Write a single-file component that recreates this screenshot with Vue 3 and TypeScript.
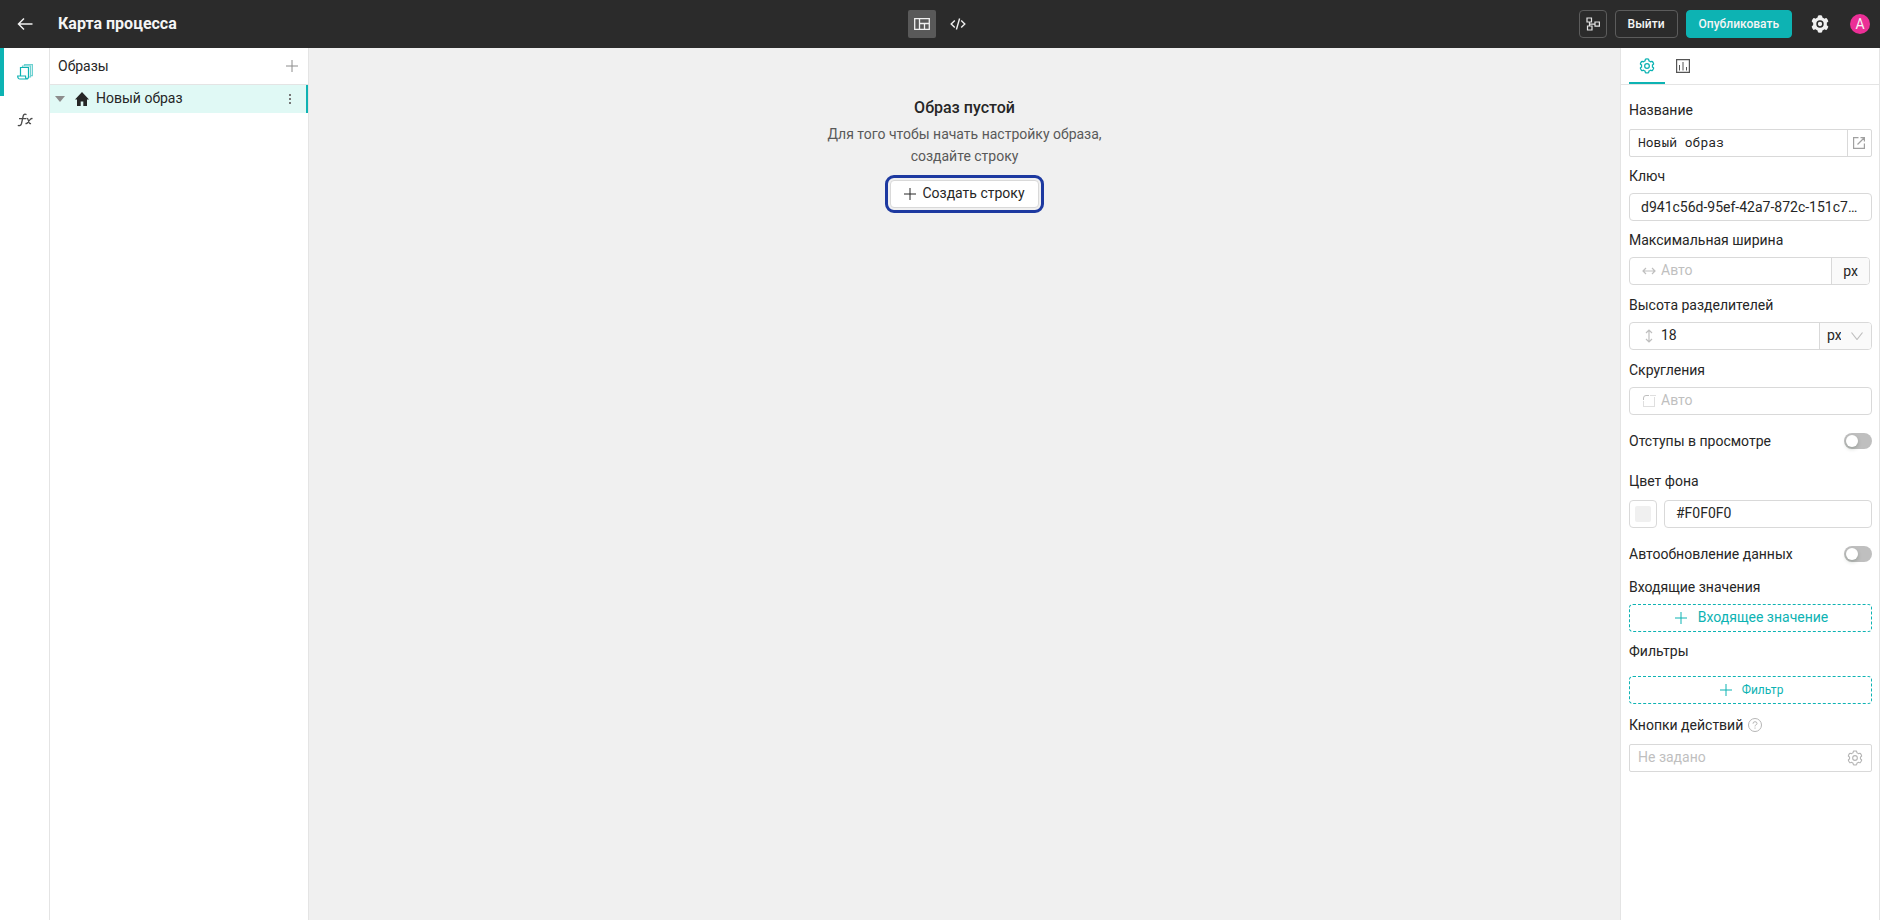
<script setup lang="ts">
import { ref } from 'vue'

const gearPath =
  'M924.8 625.7l-65.5-56c3.1-19 4.7-38.4 4.7-57.8s-1.6-38.8-4.7-57.8l65.5-56a32.03 32.03 0 009.3-35.2l-.9-2.6a443.74 443.74 0 00-79.7-137.9l-1.8-2.1a32.12 32.12 0 00-35.1-9.5l-81.3 28.9c-30-24.6-63.5-44-99.7-57.6l-15.7-85a32.05 32.05 0 00-25.8-25.7l-2.7-.5c-52.1-9.4-106.9-9.4-159 0l-2.7.5a32.05 32.05 0 00-25.8 25.7l-15.8 85.4a351.86 351.86 0 00-99 57.4l-81.9-29.1a32 32 0 00-35.1 9.5l-1.8 2.1a446.02 446.02 0 00-79.7 137.9l-.9 2.6c-4.5 12.5-.8 26.5 9.3 35.2l66.3 56.6c-3.1 18.8-4.6 38-4.6 57.1 0 19.2 1.5 38.4 4.6 57.1L99 625.5a32.03 32.03 0 00-9.3 35.2l.9 2.6c18.1 50.4 44.9 96.9 79.7 137.9l1.8 2.1a32.12 32.12 0 0035.1 9.5l81.9-29.1c29.8 24.5 63.1 43.9 99 57.4l15.8 85.4a32.05 32.05 0 0025.8 25.7l2.7.5a449.4 449.4 0 00159 0l2.7-.5a32.05 32.05 0 0025.8-25.7l15.7-85a350 350 0 0099.7-57.6l81.3 28.9a32 32 0 0035.1-9.5l1.8-2.1c34.8-41.1 61.6-87.5 79.7-137.9l.9-2.6c4.5-12.3.8-26.3-9.3-35z'

const name = ref('Новый образ')
const key = ref('d941c56d-95ef-42a7-872c-151c7a0b3e52')
const maxWidth = ref('')
const dividerHeight = ref('18')
const unit = ref('px')
const radius = ref('')
const previewPadding = ref(false)
const background = ref('#F0F0F0')
const autoRefresh = ref(false)
const actions = ref('')
</script>

<template>
  <div class="app">
    <header class="topbar">
      <button class="plain back" aria-label="Назад">
        <svg width="16" height="16" viewBox="0 0 16 16" fill="none" stroke="#f0f0f0" stroke-width="1.5"><path d="M15.5 8H1.5M7 2.5 1.5 8 7 13.5" /></svg>
      </button>
      <h1 class="title">Карта процесса</h1>
      <div class="modes">
        <button class="plain mode active" aria-label="Макет">
          <svg width="16" height="12" viewBox="0 0 16 12" fill="none" stroke="#f0f0f0" stroke-width="1.3"><path d="M.7.7h14.6v10.6H.7zM5.5.7v10.6M5.5 5.5h9.8M10.5 5.5v5.8" /></svg>
        </button>
        <button class="plain mode" aria-label="Код">
          <svg width="16" height="12" viewBox="0 0 16 12" fill="none" stroke="#f0f0f0" stroke-width="1.4"><path d="M4.8 2.5 1.2 6l3.6 3.5M11.2 2.5 14.8 6l-3.6 3.5M9.6.5 6.4 11.5" /></svg>
        </button>
      </div>
      <div class="actions">
        <button class="dark square" aria-label="Схема">
          <svg width="14" height="14" viewBox="0 0 14 14" fill="none" stroke="#e4e4e4" stroke-width="1.2"><path d="M1 1h4.500v4H1zM1.500 9h4.500v4H1.500zM9 5h4.400v4.200H9zM3.500 5v4M3.500 7.200H9" /></svg>
        </button>
        <button class="dark">Выйти</button>
        <button class="primary">Опубликовать</button>
        <button class="plain settings" aria-label="Настройки">
          <svg width="20" height="20" viewBox="0 0 1024 1024"><path :d="gearPath" fill="#f0f0f0" /><circle cx="512" cy="512" r="150" fill="none" stroke="#2b2b2b" stroke-width="80" /></svg>
        </button>
        <button class="plain avatar" aria-label="Профиль">A</button>
      </div>
    </header>

    <div class="body">
      <nav class="rail">
        <button class="plain rail-item active" aria-label="Образы">
          <svg width="16" height="16" viewBox="0 0 16 16" fill="none" stroke="#0db3b3" stroke-width="1.2"><path d="M3.500 11.500V3.500h8V12.500q0 2.500-2 2.500H3Q.7 15 .7 12h7.800q0 3 1.500 3" /><path d="M5.500 3.500V2h8v11h-2M7.500 2V.6h7.900v11h-1.900" opacity=".6" /></svg>
        </button>
        <button class="plain rail-item" aria-label="Формулы">
          <svg width="16" height="14" viewBox="0 0 16 14" fill="none" stroke="#4a4a4a" stroke-width="1.3"><path d="M9.500 1.600Q6.800.4 6.200 3L4.500 10.500Q3.700 13.400.8 12.300M2 5.600h7M9.500 5.600q1.300-.4 1.700 1.300l.8 2.500q.5 1.600 2 1M15.500 5.600q-1.500-.4-2.700 1.200L10.800 9.300Q9.800 10.900 8.500 10.400" /></svg>
        </button>
      </nav>

      <aside class="sidebar">
        <div class="sidebar-head">
          <span>Образы</span>
          <button class="plain" aria-label="Добавить образ">
            <svg width="12" height="12" viewBox="0 0 12 12" stroke="#8c8c8c"><path d="M6 0v12M0 6h12" /></svg>
          </button>
        </div>
        <div class="tree-row">
          <svg class="caret" width="10" height="6" viewBox="0 0 10 6"><path d="M0 0h10L5 6z" fill="#8c8c8c" /></svg>
          <svg class="home" width="14" height="14" viewBox="0 0 14 14"><path d="M7 0 0 7.400h2V14h3.700V9.500h2.600V14H12V7.400h2z" fill="#262626" /></svg>
          <span class="tree-name">Новый образ</span>
          <button class="plain" aria-label="Меню">
            <svg width="4" height="12" viewBox="0 0 4 12" fill="#777"><path d="M1 1h2v2H1zM1 5h2v2H1zM1 9h2v2H1z" /></svg>
          </button>
        </div>
      </aside>

      <main class="canvas">
        <h2>Образ пустой</h2>
        <p>Для того чтобы начать настройку образа,<br />создайте строку</p>
        <button class="create">
          <svg width="12" height="12" viewBox="0 0 12 12" stroke="#262626"><path d="M6 0v12M0 6h12" /></svg>
          <span class="raised">Создать строку</span>
        </button>
      </main>

      <aside class="panel">
        <div class="tabs">
          <button class="plain tab active" aria-label="Параметры">
            <svg width="16" height="16" viewBox="0 0 1024 1024" fill="none" stroke="#0db3b3" stroke-width="80"><path :d="gearPath" /><circle cx="512" cy="512" r="150" /></svg>
          </button>
          <button class="plain tab" aria-label="Данные">
            <svg width="14" height="14" viewBox="0 0 14 14" fill="none" stroke="#555"><path d="M.5.5h13v13H.5z" stroke-width="1.4" /><path d="M3.500 6v5.500M7 3v8.500M10.500 8v3.500" /></svg>
          </button>
        </div>

        <form class="form" @submit.prevent>
          <label for="name">Название</label>
          <div class="box sharp wide-gap">
            <input id="name" v-model="name" class="mono" />
            <button type="button" class="plain open" aria-label="Открыть редактор">
              <svg width="12" height="12" viewBox="0 0 12 12" fill="none" stroke="#a0a0a0" stroke-width="1.200"><path d="M5.500.6H.6v10.800h10.800V6.500M4.500 7.500 11 1M7.500.6h3.900v3.900" /></svg>
            </button>
          </div>

          <label for="key" class="near">Ключ</label>
          <div class="box padded"><input id="key" v-model="key" /></div>

          <label for="max" class="near">Максимальная ширина</label>
          <div class="box padded shorter">
            <svg class="prefix" width="14" height="14" viewBox="0 0 14 14" fill="none" stroke="#bfbfbf" stroke-width="1.200"><path d="M1 7h12M4 4 1 7l3 3M10 4l3 3-3 3" /></svg>
            <input id="max" v-model="maxWidth" class="raised" placeholder="Авто" />
            <span class="addon">px</span>
          </div>

          <label for="divider">Высота разделителей</label>
          <div class="box padded">
            <svg class="prefix" width="14" height="14" viewBox="0 0 14 14" fill="none" stroke="#bfbfbf" stroke-width="1.200"><path d="M7 1v12M4 4l3-3 3 3M4 10l3 3 3-3" /></svg>
            <input id="divider" v-model="dividerHeight" class="raised" />
            <div class="unit">
              <select v-model="unit" class="raised" aria-label="Единица"><option>px</option><option>%</option></select>
              <svg width="12" height="8" viewBox="0 0 12 8" fill="none" stroke="#bfbfbf" stroke-width="1.200"><path d="m.5.5 5.500 7 5.500-7" /></svg>
            </div>
          </div>

          <label for="radius">Скругления</label>
          <div class="box padded">
            <svg class="prefix" width="14" height="14" viewBox="0 0 14 14" fill="none" stroke="#bfbfbf"><path d="M1.500 6V4q0-2.500 2.500-2.500h3" /><path d="M8.500 1.500h5M12.500 3.500v9M1.500 7.500v5M2.500 12.500h10" stroke-dasharray="1 1" /></svg>
            <input id="radius" v-model="radius" class="raised" placeholder="Авто" />
          </div>

          <div class="switch-row">
            <label for="padding">Отступы в просмотре</label>
            <input id="padding" v-model="previewPadding" type="checkbox" class="switch" />
          </div>

          <label for="color" class="color-label">Цвет фона</label>
          <div class="color-row">
            <button type="button" class="swatch" aria-label="Выбрать цвет"><span :style="{ background: background }"></span></button>
            <div class="box padded"><input id="color" v-model="background" class="raised" /></div>
          </div>

          <div class="switch-row">
            <label for="auto">Автообновление данных</label>
            <input id="auto" v-model="autoRefresh" type="checkbox" class="switch" />
          </div>

          <h3 class="inputs-title">Входящие значения</h3>
          <button type="button" class="dashed">
            <svg width="12" height="12" viewBox="0 0 12 12" stroke="#0db3b3"><path d="M6 0v12M0 6h12" /></svg>
            <span class="raised">Входящее значение</span>
          </button>

          <h3 class="near">Фильтры</h3>
          <button type="button" class="dashed small">
            <svg width="12" height="12" viewBox="0 0 12 12" stroke="#0db3b3"><path d="M6 0v12M0 6h12" /></svg>
            Фильтр
          </button>

          <div class="action-label">
            <label for="actions">Кнопки действий</label>
            <svg width="14" height="14" viewBox="0 0 14 14" fill="none" stroke="#b5b5b5"><circle cx="7" cy="7" r="6.500" /><path d="M5 5.700q0-2 2-2t2 1.800q0 1-1.200 1.500-.8.4-.8 1.400M7 9.500v1.200" /></svg>
          </div>
          <div class="box sharp wide-gap">
            <input id="actions" v-model="actions" class="raised" placeholder="Не задано" />
            <button type="button" class="plain gear" aria-label="Настроить действия">
              <svg width="16" height="16" viewBox="0 0 1024 1024" fill="none" stroke="#b5b5b5" stroke-width="70"><path :d="gearPath" /><circle cx="512" cy="512" r="150" /></svg>
            </button>
          </div>
        </form>
      </aside>
    </div>
  </div>
</template>

<style>
body {
  margin: 0;
}
</style>

<style scoped>
* {
  box-sizing: border-box;
}
.app {
  display: flex;
  flex-direction: column;
  min-height: 100vh;
  color: #262626;
  font: 14px/22px Roboto, 'Liberation Sans', sans-serif;
}
button,
input,
select {
  font: inherit;
  color: inherit;
  margin: 0;
}
svg {
  display: block;
  flex: none;
}
.plain {
  display: flex;
  align-items: center;
  justify-content: center;
  padding: 0;
  border: 0;
  background: none;
}
.topbar {
  display: grid;
  grid-template-columns: 50px 1fr auto 1fr;
  align-items: center;
  height: 48px;
  background: #2b2b2b;
  color: #f5f5f5;
}
.back {
  height: 48px;
}
.title {
  margin: 0;
  padding-left: 8px;
  font-size: 16px;
  font-weight: 700;
}
.modes {
  display: flex;
  gap: 8px;
  margin-right: 50px;
}
.mode {
  width: 28px;
  height: 28px;
  border-radius: 2px;
}
.mode.active {
  background: #595959;
}
.actions {
  display: flex;
  justify-content: flex-end;
  align-items: center;
  gap: 8px;
  padding-right: 10px;
}
.dark,
.primary {
  display: flex;
  align-items: center;
  justify-content: center;
  height: 28px;
  padding: 0 12px;
  border: 1px solid #5c5c5c;
  border-radius: 4px;
  background: none;
  font-size: 12px;
  font-weight: 500;
}
.dark.square {
  width: 28px;
  padding: 0;
}
.primary {
  border-color: #0db3b3;
  background: #0db3b3;
}
.settings {
  width: 40px;
  margin-right: 2px;
}
.avatar {
  width: 20px;
  height: 20px;
  border-radius: 50%;
  background: #eb2f96;
}
.body {
  display: flex;
  flex: 1;
}
.rail {
  width: 50px;
  border-right: 1px solid #e4e4e4;
}
.rail-item {
  width: 100%;
  height: 48px;
}
.rail-item.active {
  padding-right: 3px;
  border-left: 4px solid #0db3b3;
}
.sidebar {
  width: 259px;
  border-right: 1px solid #e4e4e4;
}
.sidebar-head {
  display: flex;
  align-items: center;
  justify-content: space-between;
  height: 37px;
  padding: 0 10px 0 8px;
  border-bottom: 1px solid #e4e4e4;
}
.tree-row {
  display: flex;
  align-items: center;
  height: 28px;
  padding: 0 14px 0 5px;
  border-right: 2px solid #0db3b3;
  background: #e0f9f5;
}
.home {
  margin: 0 7px 0 10px;
}
.tree-name {
  flex: 1;
  padding-bottom: 2px;
}
.canvas {
  display: flex;
  flex: 1;
  flex-direction: column;
  align-items: center;
  padding-top: 48px;
  background: #f0f0f0;
}
.canvas h2 {
  margin: 0;
  font-size: 16px;
  line-height: 24px;
  font-weight: 500;
}
.canvas p {
  margin: 3px 0 13px;
  color: #595959;
  text-align: center;
}
.create {
  display: flex;
  align-items: center;
  gap: 6px;
  height: 28px;
  padding: 0 13px;
  border: 1px solid #d9d9d9;
  border-radius: 4px;
  background: #fff;
  outline: 3px solid #1d39a0;
  outline-offset: 2px;
}
.panel {
  width: 260px;
  border: solid #e4e4e4;
  border-width: 0 1px;
}
.tabs {
  display: flex;
  height: 37px;
  padding-left: 8px;
  border-bottom: 1px solid #e4e4e4;
}
.tab {
  width: 36px;
  padding-top: 2px;
  border-bottom: 2px solid transparent;
}
.tab.active {
  border-color: #0db3b3;
}
.form {
  display: flex;
  flex-direction: column;
  padding: 14px 7px 14px 8px;
}
.form h3 {
  margin: 0;
  font-size: 14px;
  font-weight: 400;
}
.box {
  display: flex;
  align-items: center;
  flex: 1;
  height: 28px;
  margin: 6px 0 9px;
  border: 1px solid #d9d9d9;
  border-radius: 4px;
  overflow: hidden;
}
.form > .box {
  flex: none;
}
.box input {
  flex: 1;
  min-width: 0;
  height: 26px;
  padding: 0 8px;
  border: 0;
  outline: 0;
  background: none;
  text-overflow: ellipsis;
}
.box input::placeholder {
  color: #bfbfbf;
  opacity: 1;
}
.box.padded input {
  padding: 0 11px;
}
.box .prefix {
  margin-left: 12px;
}
.box .prefix + input {
  padding-left: 5px;
}
.raised,
.box input.raised,
.unit select.raised {
  padding-bottom: 2px;
}
.box.sharp {
  border-radius: 2px;
}
.box.wide-gap {
  margin-top: 8px;
}
.box .mono {
  padding-bottom: 2px;
  font-family: 'Roboto Mono', 'Liberation Mono', monospace;
  font-size: 13px;
}
.open {
  width: 24px;
  height: 26px;
  padding-right: 2px;
  border-left: 1px solid #d9d9d9;
}
.gear {
  width: 32px;
  height: 26px;
}
.box.shorter {
  margin-right: 2px;
}
.addon {
  width: 38px;
  height: 26px;
  border-left: 1px solid #d9d9d9;
  background: #fafafa;
  line-height: 26px;
  text-align: center;
}
.unit {
  display: flex;
  align-items: center;
  gap: 10px;
  height: 26px;
  padding: 0 8px 0 7px;
  border-left: 1px solid #d9d9d9;
  background: #fafafa;
}
.unit select {
  width: 14px;
  padding: 0;
  border: 0;
  background: none;
  appearance: none;
}
.switch-row {
  display: flex;
  align-items: center;
  justify-content: space-between;
  margin-top: 6px;
}
.switch {
  appearance: none;
  width: 28px;
  height: 16px;
  border-radius: 8px;
  background: #bfbfbf;
}
.switch::before {
  content: '';
  display: block;
  width: 12px;
  height: 12px;
  margin: 2px;
  border-radius: 50%;
  background: #fff;
  box-shadow: 0 2px 4px rgba(0, 35, 11, 0.2);
}
.switch:checked {
  background: #0db3b3;
}
.switch:checked::before {
  margin-left: 14px;
}
.color-label {
  margin-top: 18px;
}
.color-row {
  display: flex;
  gap: 7px;
  margin: 8px 0 9px;
}
.color-row .box {
  margin: 0;
}
.swatch {
  width: 28px;
  height: 28px;
  padding: 5px;
  border: 1px solid #d9d9d9;
  border-radius: 4px;
  background: #fff;
}
.swatch span {
  display: block;
  height: 16px;
  border-radius: 2px;
}
.form .inputs-title {
  margin-top: 11px;
}
.dashed {
  display: flex;
  align-items: center;
  justify-content: center;
  gap: 11px;
  height: 28px;
  margin: 6px 0 9px;
  padding: 0 6px 0 8px;
  border: 1px dashed #0db3b3;
  border-radius: 4px;
  background: #fff;
  color: #0db3b3;
}
.dashed.small {
  gap: 10px;
  margin: 14px 0 10px;
  font-size: 12px;
}
.near,
.form .near {
  margin-top: -1px;
}
.action-label {
  display: flex;
  align-items: center;
  gap: 5px;
}
</style>
